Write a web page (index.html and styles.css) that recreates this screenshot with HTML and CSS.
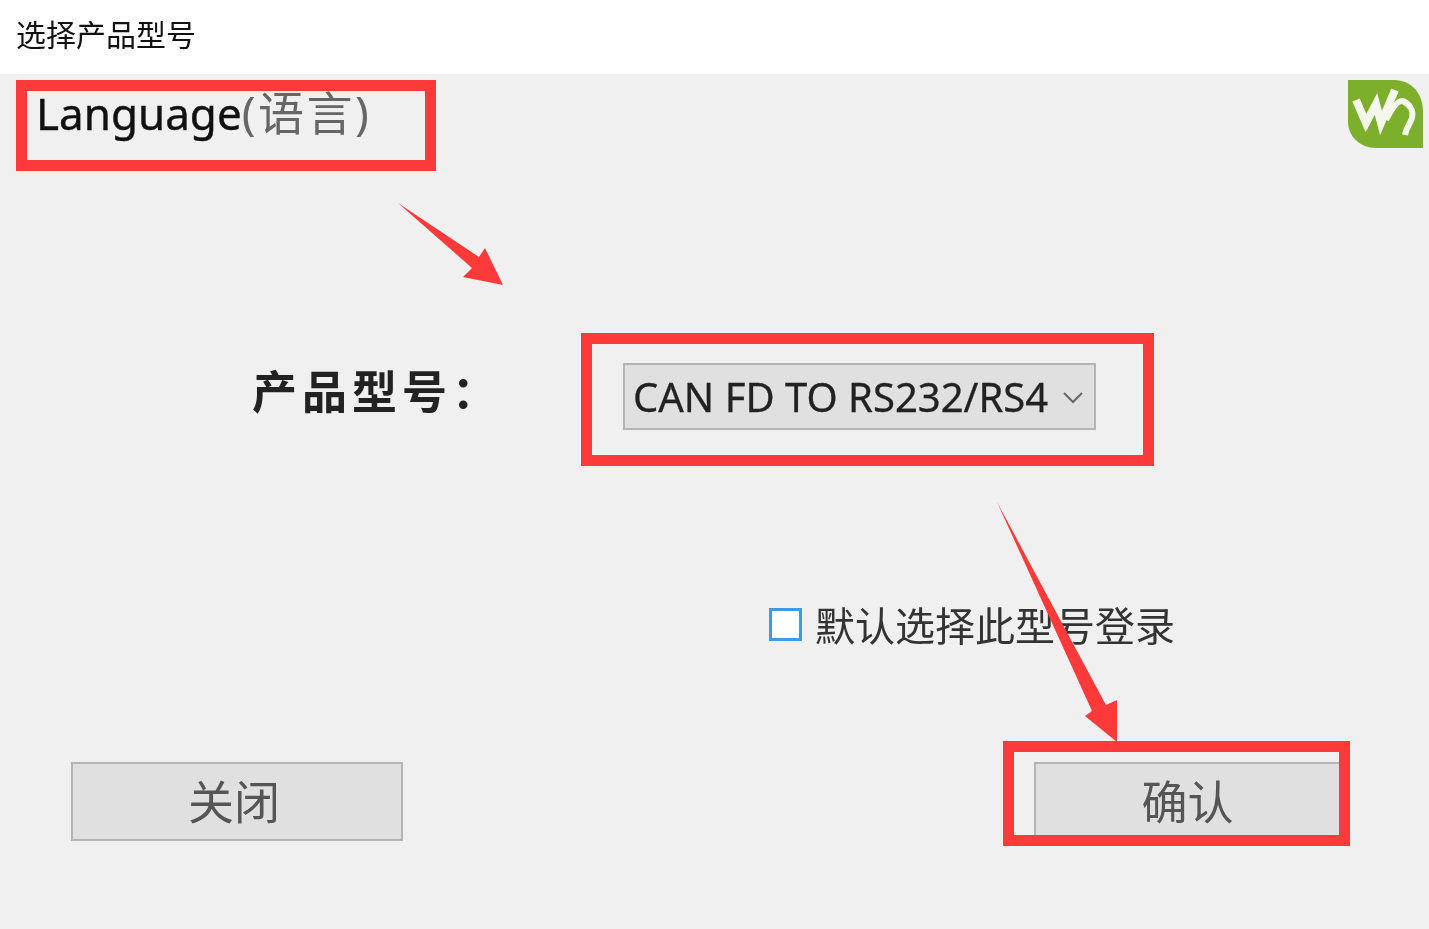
FILE: index.html

```html
<!DOCTYPE html>
<html lang="zh-CN">
<head>
  <meta charset="UTF-8" />
  <title>选择产品型号</title>
  <link rel="stylesheet" href="styles.css">
</head>
<body>

<div class="title-bar">选择产品型号</div>

<div class="dialog">
  <div class="top-row">
    <div class="language">Language<span class="language-zh">(语言)</span></div>
    <svg class="logo" viewBox="0 0 75 68" aria-label="Waveshare">
      <path d="M0 0H46C64 0 75 14 75 32V68H28C12 68 0 56 0 42Z" fill="#7cb02c"/>
      <path d="M8 20L18 43L28 24L33 43L47 10" fill="none" stroke="#f4f8ec" stroke-width="8"/>
      <path d="M38 40C44 28 50 20 55 21C61 24 66 30 64 38C62 44 58 48 57 55" fill="none" stroke="#f4f8ec" stroke-width="6"/>
    </svg>
  </div>

  <div class="model-row">
    <div class="model-label">产品型号：</div>
    <div class="select">
      <span class="select-value">CAN FD TO RS232/RS4</span>
      <svg class="chevron" viewBox="0 0 22 14"><path d="M2 3L11 12L20 3" fill="none" stroke="#666" stroke-width="2"/></svg>
    </div>
  </div>

  <label class="remember-row">
    <span class="checkbox"></span>
    <span class="remember-text">默认选择此型号登录</span>
  </label>

  <div class="button-row">
    <button class="btn close-btn">关闭</button>
    <button class="btn ok-btn">确认</button>
  </div>
</div>

<!-- red annotations drawn over the screenshot -->
<div class="mark mark-language"></div>
<div class="mark mark-select"></div>
<div class="mark mark-ok"></div>
<svg class="arrows" viewBox="0 0 1429 929">
  <polygon points="398,203 479,257 485,248 503,285 463,277 472,268" fill="#fd3a3a"/>
  <polygon points="997,502 1106,705 1117,700 1117,742 1085,716 1092,711" fill="#fd3a3a"/>
</svg>

</body>
</html>
```

FILE: styles.css

```css
body {
  margin: 0;
  height: 929px;
  overflow: hidden;
  font-family: "Noto Sans", "Noto Sans CJK SC", sans-serif;
  background-color: #f0f0f0;
  color: #111;
}

.title-bar {
  height: 74px;
  padding-left: 16px;
  background-color: #fff;
  font-size: 30px;
  line-height: 69px;
  color: #111;
  filter: blur(0.4px);
}

.dialog {
  height: 855px;
  background-color: #f0f0f0;
  filter: blur(0.7px);
}

.top-row {
  display: flex;
  justify-content: space-between;
  height: 69px;
  padding: 6px 6px 0 36px;
}

.language {
  font-size: 44px;
  line-height: 64px;
  -webkit-text-stroke: 0.4px #111;
}

.language-zh {
  font-size: 46px;
  color: #666;
  letter-spacing: 2.5px;
  -webkit-text-stroke: 0;
}

.logo {
  width: 75px;
  height: 68px;
  filter: blur(0.6px);
}

.model-row {
  display: flex;
  align-items: center;
  height: 67px;
  margin-top: 214px;
  padding-left: 252px;
}

.model-label {
  width: 371px;
  margin-top: -14px;
  font-size: 45px;
  font-weight: 700;
  letter-spacing: 5px;
  color: #222;
  white-space: nowrap;
}

.select {
  display: flex;
  align-items: center;
  justify-content: space-between;
  box-sizing: border-box;
  width: 473px;
  height: 67px;
  padding: 0 10px 0 8px;
  border: 2px solid #b4b4b4;
  background-color: #e0e0e0;
}

.select-value {
  font-size: 40px;
  color: #222;
  white-space: nowrap;
  -webkit-text-stroke: 0.3px #222;
}

.chevron {
  width: 22px;
  height: 14px;
}

.remember-row {
  display: flex;
  align-items: center;
  height: 50px;
  margin-top: 169px;
  padding-left: 769px;
}

.checkbox {
  box-sizing: border-box;
  width: 33px;
  height: 33px;
  margin-right: 13px;
  border: 3px solid #3d9be8;
  background-color: #fff;
}

.remember-text {
  font-size: 40px;
  color: #333;
}

.button-row {
  display: flex;
  justify-content: space-between;
  margin-top: 113px;
  padding: 0 84px 0 71px;
}

.btn {
  box-sizing: border-box;
  height: 79px;
  padding-bottom: 7px;
  border: 2px solid #b4b4b4;
  background-color: #e0e0e0;
  font-family: inherit;
  font-size: 46px;
  color: #555;
}

.close-btn {
  width: 332px;
  padding-right: 12px;
}

.ok-btn {
  width: 311px;
  padding-right: 10px;
}

.mark {
  position: absolute;
  box-sizing: border-box;
  border: 11px solid #fd3a3a;
}

.mark-language {
  left: 16px;
  top: 80px;
  width: 420px;
  height: 91px;
}

.mark-select {
  left: 581px;
  top: 333px;
  width: 573px;
  height: 133px;
}

.mark-ok {
  left: 1003px;
  top: 741px;
  width: 347px;
  height: 105px;
}

.arrows {
  position: absolute;
  left: 0;
  top: 0;
  width: 1429px;
  height: 929px;
}
```
